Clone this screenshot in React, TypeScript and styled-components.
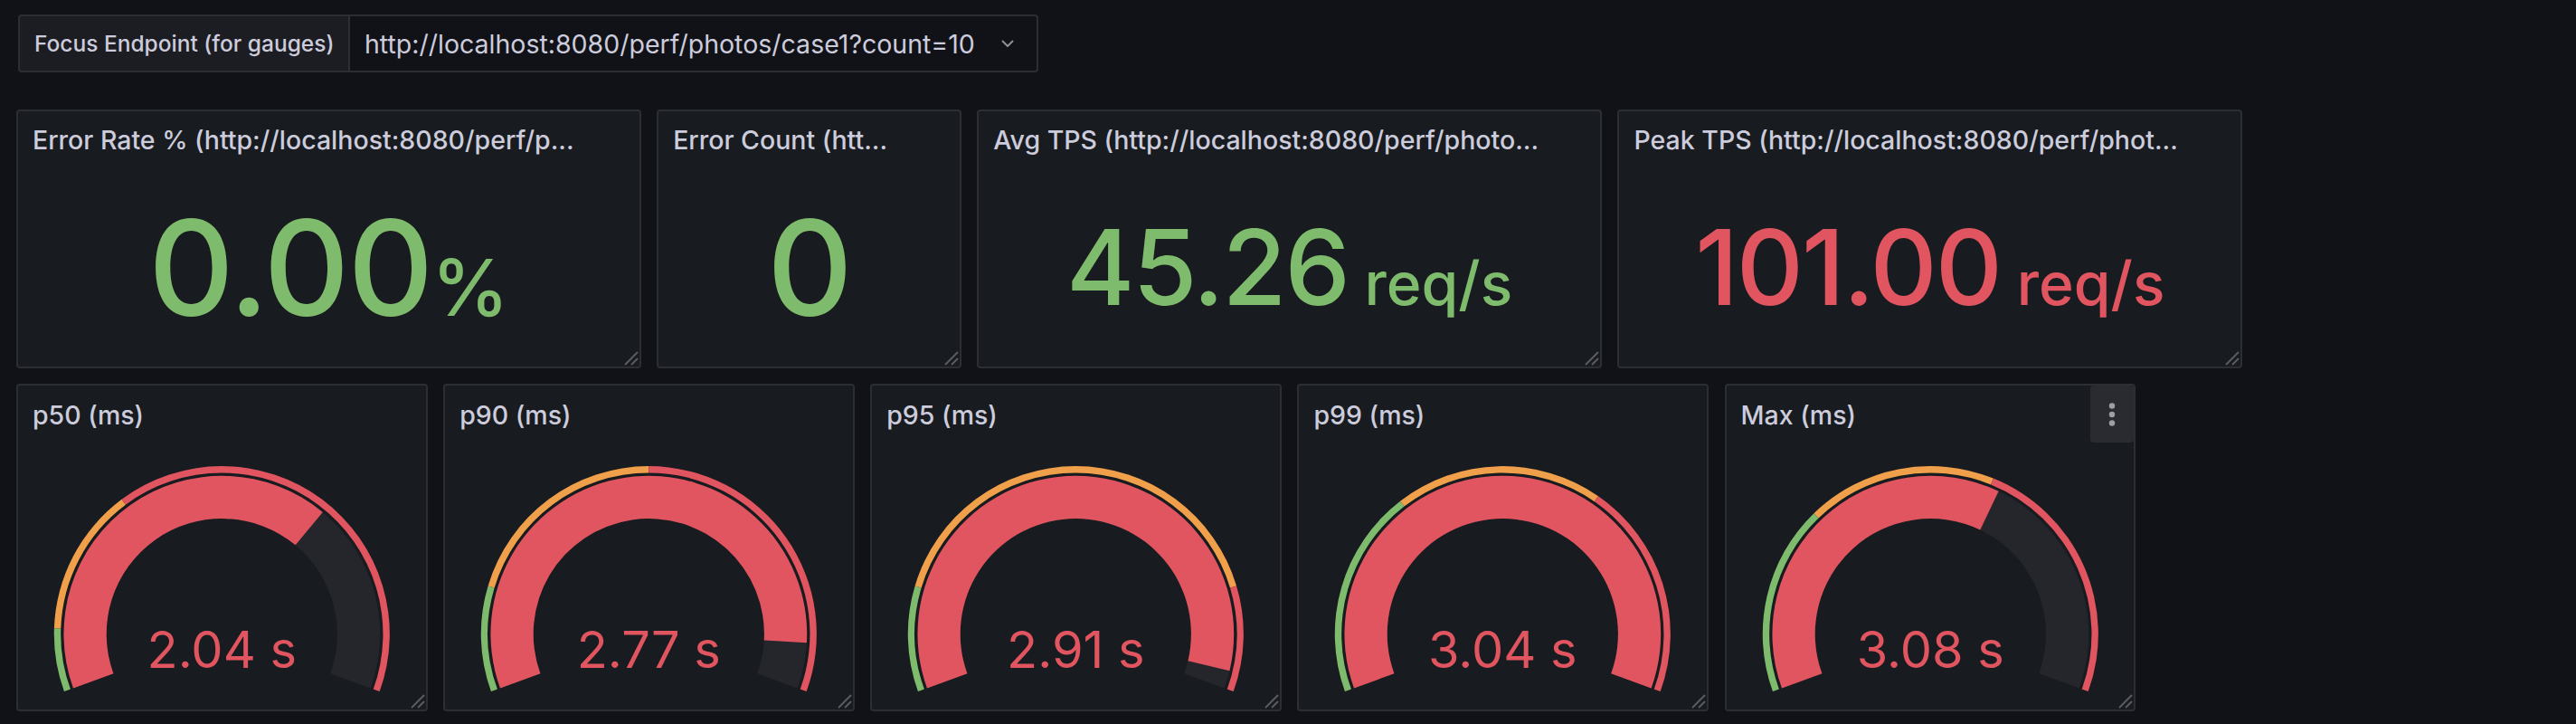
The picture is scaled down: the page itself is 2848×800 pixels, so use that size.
import React from "react";
import styled, { createGlobalStyle } from "styled-components";

const GREEN = "#7fbb6c";
const ORANGE = "#f0a04a";
const RED = "#e0555f";
const TRACK = "#25262b";

const GlobalStyle = createGlobalStyle`
  html, body {
    margin: 0;
    padding: 0;
    background: #111217;
  }
  body {
    font-family: Inter, "Noto Sans", sans-serif;
    color: #ccccdc;
  }
`;

const Page = styled.div`
  width: 2848px;
  height: 800px;
  box-sizing: border-box;
  padding: 16px 18px 0;
  overflow: hidden;
`;

const VarRow = styled.div`
  display: flex;
  height: 64px;
  margin-left: 2px;
  margin-bottom: 40.7px;
`;

const VarLabel = styled.label`
  display: flex;
  align-items: center;
  width: 367px;
  box-sizing: border-box;
  padding: 0 16px;
  background: #1c1d22;
  border: 2px solid #2c2e33;
  border-radius: 4px 0 0 4px;
  font-size: 24.5px;
  font-weight: 500;
  white-space: nowrap;
`;

const VarSelect = styled.div`
  display: flex;
  align-items: center;
  width: 761px;
  box-sizing: border-box;
  padding: 0 16px;
  border: 2px solid #2c2e33;
  border-left: none;
  border-radius: 0 4px 4px 0;
  font-size: 28.5px;
  white-space: nowrap;
`;

const SelectText = styled.span`
  flex: 1;
`;

const Chevron = styled.span`
  display: flex;
  width: 32px;
  justify-content: center;
  align-items: center;
`;

const Grid = styled.div`
  display: grid;
  grid-template-columns: repeat(42, 41.53px);
  grid-template-rows: 286px 362px;
  gap: 17.6px 17.5px;
`;

const Panel = styled.section<{ $span: number }>`
  grid-column: span ${(p) => p.$span};
  position: relative;
  display: flex;
  flex-direction: column;
  box-sizing: border-box;
  background: #181b1f;
  border: 2px solid #2c2e33;
  border-radius: 4px;
  overflow: hidden;
`;

const Header = styled.header`
  display: flex;
  align-items: center;
  height: 64px;
  padding-left: 16px;
  flex-shrink: 0;
`;

const Title = styled.h2`
  flex: 1;
  min-width: 0;
  margin: 0;
  font-size: 28.5px;
  font-weight: 500;
  color: #ccccdc;
  white-space: nowrap;
  overflow: hidden;
`;

const MenuButton = styled.button`
  align-self: flex-start;
  width: 48px;
  height: 63px;
  padding: 0;
  border: none;
  border-radius: 4px;
  background: #2a2b30;
  display: flex;
  align-items: center;
  justify-content: center;
`;

const StatBody = styled.div`
  flex: 1;
  display: flex;
  align-items: center;
  justify-content: center;
`;

const StatValue = styled.div<{ $color: string; $size: number }>`
  color: ${(p) => p.$color};
  font-size: ${(p) => p.$size}px;
  font-weight: 500;
  font-variant-numeric: proportional-nums;
  letter-spacing: -2px;
  line-height: 1;
  white-space: pre;
`;

const Unit = styled.span<{ $size: number }>`
  font-size: ${(p) => p.$size}px;
  letter-spacing: 0;
`;

const GaugeBody = styled.div`
  flex: 1;
  min-height: 0;
  svg {
    display: block;
    width: 100%;
    height: 100%;
  }
`;

const Resize = styled.svg`
  position: absolute;
  right: 1px;
  bottom: 1px;
  width: 18px;
  height: 18px;
`;

const ResizeHandle = () => (
  <Resize viewBox="0 0 18 18">
    <path d="M17 3 L3 17 M17 10 L10 17" stroke="#5b5c63" strokeWidth="2" />
  </Resize>
);

const START = 200;
const SWEEP = 220;

const angleOf = (f: number) => START - SWEEP * Math.min(Math.max(f, 0), 1);

const pt = (cx: number, cy: number, r: number, a: number) => {
  const rad = (a * Math.PI) / 180;
  return `${(cx + r * Math.cos(rad)).toFixed(2)} ${(cy - r * Math.sin(rad)).toFixed(2)}`;
};

const sector = (cx: number, cy: number, r0: number, r1: number, a0: number, a1: number) => {
  const large = a0 - a1 > 180 ? 1 : 0;
  return `M${pt(cx, cy, r1, a0)} A${r1} ${r1} 0 ${large} 1 ${pt(cx, cy, r1, a1)} L${pt(cx, cy, r0, a1)} A${r0} ${r0} 0 ${large} 0 ${pt(cx, cy, r0, a0)} Z`;
};

type GaugeProps = { value: number; max: number; steps: number[]; label: string };

const Gauge = ({ value, max, steps, label }: GaugeProps) => {
  const cx = 225.5;
  const cy = 210.7;
  const colors = [GREEN, ORANGE, RED];
  const bounds = [0, ...steps, max];
  const fillEnd = angleOf(value / max);
  return (
    <svg viewBox="0 0 451 294">
      {colors.map((c, i) => (
        <path
          key={c}
          d={sector(cx, cy, 178.3, 185.7, angleOf(bounds[i] / max), angleOf(bounds[i + 1] / max))}
          fill={c}
        />
      ))}
      <path d={sector(cx, cy, 127.7, 175, START, START - SWEEP)} fill={TRACK} />
      <path d={sector(cx, cy, 127.7, 175, START, fillEnd)} fill={RED} />
      <text
        x={cx}
        y={248}
        textAnchor="middle"
        fill={RED}
        fontSize="56"
        fontFamily="Inter, 'Noto Sans', sans-serif"
      >
        {label}
      </text>
    </svg>
  );
};

const stats = [
  { title: "Error Rate % (http://localhost:8080/perf/p...", span: 12, value: "0.00", unit: "%", color: GREEN, size: 147, unitSize: 86 },
  { title: "Error Count (htt...", span: 6, value: "0", unit: "", color: GREEN, size: 147, unitSize: 86 },
  { title: "Avg TPS (http://localhost:8080/perf/photo...", span: 12, value: "45.26", unit: " req/s", color: GREEN, size: 115, unitSize: 66 },
  { title: "Peak TPS (http://localhost:8080/perf/phot...", span: 12, value: "101.00", unit: " req/s", color: RED, size: 115, unitSize: 66 },
];

const gauges = [
  { title: "p50 (ms)", value: 2.04, max: 3, steps: [0.3, 1.0], label: "2.04 s" },
  { title: "p90 (ms)", value: 2.77, max: 3, steps: [0.5, 1.5], label: "2.77 s" },
  { title: "p95 (ms)", value: 2.91, max: 3, steps: [0.5, 2.5], label: "2.91 s" },
  { title: "p99 (ms)", value: 3.04, max: 3.04, steps: [1.0, 2.0], label: "3.04 s" },
  { title: "Max (ms)", value: 3.08, max: 5, steps: [1.5, 3.0], label: "3.08 s", menu: true },
];

export default function App() {
  return (
    <>
      <GlobalStyle />
      <Page>
        <VarRow>
          <VarLabel>Focus Endpoint (for gauges)</VarLabel>
          <VarSelect>
            <SelectText>http://localhost:8080/perf/photos/case1?count=10</SelectText>
            <Chevron>
              <svg width="14" height="8" viewBox="0 0 14 8">
                <polyline points="1,1 7,7 13,1" fill="none" stroke="#8e8f99" strokeWidth="2" />
              </svg>
            </Chevron>
          </VarSelect>
        </VarRow>

        <Grid>
          {stats.map((s) => (
            <Panel key={s.title} $span={s.span}>
              <Header>
                <Title>{s.title}</Title>
              </Header>
              <StatBody>
                <StatValue $color={s.color} $size={s.size}>
                  {s.value}
                  {s.unit && <Unit $size={s.unitSize}>{s.unit}</Unit>}
                </StatValue>
              </StatBody>
              <ResizeHandle />
            </Panel>
          ))}

          {gauges.map((g) => (
            <Panel key={g.title} $span={8}>
              <Header>
                <Title>{g.title}</Title>
                {g.menu && (
                  <MenuButton aria-label="Menu">
                    <svg width="8" height="28" viewBox="0 0 8 28">
                      <circle cx="4" cy="4.5" r="3.2" fill="#9d9ea8" />
                      <circle cx="4" cy="14" r="3.2" fill="#9d9ea8" />
                      <circle cx="4" cy="23.5" r="3.2" fill="#9d9ea8" />
                    </svg>
                  </MenuButton>
                )}
              </Header>
              <GaugeBody>
                <Gauge value={g.value} max={g.max} steps={g.steps} label={g.label} />
              </GaugeBody>
              <ResizeHandle />
            </Panel>
          ))}
        </Grid>
      </Page>
    </>
  );
}
